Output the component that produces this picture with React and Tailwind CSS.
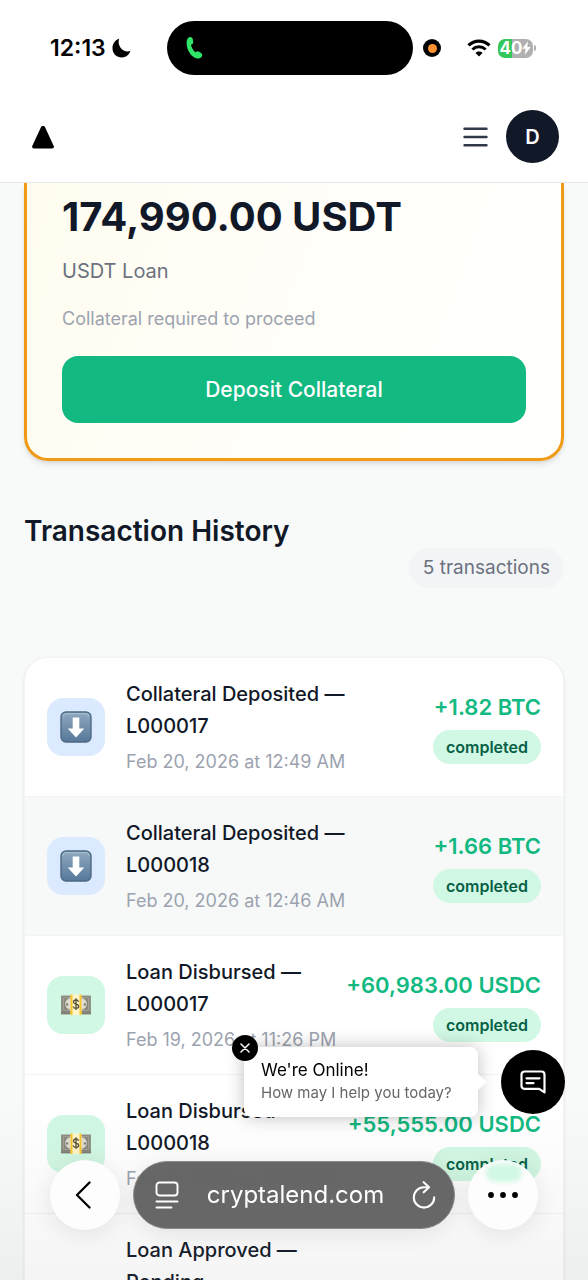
const transactions = [
  { id: 1, type: "deposit", title: "Collateral Deposited —", loan: "L000017", date: "Feb 20, 2026 at 12:49 AM", amount: "+1.82 BTC", status: "completed" },
  { id: 2, type: "deposit", title: "Collateral Deposited —", loan: "L000018", date: "Feb 20, 2026 at 12:46 AM", amount: "+1.66 BTC", status: "completed", active: true },
  { id: 3, type: "loan", title: "Loan Disbursed —", loan: "L000017", date: "Feb 19, 2026 at 11:26 PM", amount: "+60,983.00 USDC", status: "completed" },
  { id: 4, type: "loan", title: "Loan Disbursed —", loan: "L000018", date: "Feb 19, 2026 at 11:20 PM", amount: "+55,555.00 USDC", status: "completed" },
  { id: 5, title: "Loan Approved —", loan: "Pending" },
];

function ArrowIcon() {
  return (
    <svg width="32" height="32" viewBox="0 0 32 32" aria-hidden="true">
      <defs>
        <linearGradient id="tile" x1="0" y1="0" x2="0" y2="1">
          <stop offset="0" stopColor="#8fa9bf" />
          <stop offset="1" stopColor="#56789a" />
        </linearGradient>
      </defs>
      <rect x="1" y="1" width="30" height="30" rx="5" fill="url(#tile)" stroke="#4d6a84" strokeWidth="1.4" />
      <path d="M3 5.500Q3 2.700 6 2.700H26Q29 2.700 29 5.500" fill="none" stroke="#b4c6d5" strokeWidth="0.8" />
      <path d="M12.700 6.500h6.600v11h5L16 26.500 7.700 17.500h5z" fill="#fff" />
    </svg>
  );
}

function MoneyIcon() {
  return (
    <svg width="32" height="22" viewBox="0 0 32 22" aria-hidden="true">
      <rect x="1" y="1.500" width="30" height="19" fill="#96958a" />
      <rect x="3" y="3" width="26" height="14" fill="#bdbbad" stroke="#76756c" strokeWidth="0.7" />
      <path d="M4 4h5l-4 4.500v3L9 16H4zM28 4h-5l4 4.500v3L23 16h5z" fill="#89887d" />
      <ellipse cx="9" cy="10" rx="3.500" ry="5" fill="#dedccf" />
      <ellipse cx="23" cy="10" rx="3.500" ry="5" fill="#dedccf" />
      <circle cx="7" cy="10.500" r="1.300" fill="#85847a" />
      <circle cx="25" cy="10.500" r="1.300" fill="#85847a" />
      <path d="M1 18h30M1 19.500h30" stroke="#6d6c64" strokeWidth="0.6" />
      <rect x="10.500" y="0.500" width="11" height="20.500" fill="#fff5c8" />
      <path d="M11.500 0.500v20.500M20.500 0.500v20.500" stroke="#f6c62f" strokeWidth="2" />
      <path d="M18.600 7.800c-.5-1.300-1.400-1.800-2.600-1.800-1.500 0-2.500.8-2.500 2 0 2.900 5.200 1.500 5.200 4.300 0 1.300-1.100 2.100-2.700 2.100s-2.500-.7-2.800-2M16 4.300v11.800" fill="none" stroke="#57513a" strokeWidth="1.300" />
    </svg>
  );
}

function StatusBar() {
  return (
    <div className="grid h-24 grid-cols-[1fr_auto_1fr] items-center pr-2">
      <div className="flex items-center gap-[6px] pl-[50px]">
        <span className="text-[23px] leading-7 font-semibold text-black">12:13</span>
        <svg width="19" height="20" viewBox="0 0 19 20" aria-hidden="true">
          <path d="M7.200.6C5.600 5 7.600 10.500 11.700 12.500c2.300 1.100 4.700 1.200 6.700.3C17.100 16.900 13.700 19.500 9.700 19.500 4.500 19.500.5 15.500.5 10.200.5 5.800 3.200 2 7.200.6z" fill="#000" />
        </svg>
      </div>
      <div className="flex h-[54px] w-[246px] items-center rounded-full bg-black pl-[19px]">
        <svg width="17" height="24" viewBox="0 0 17 24" aria-hidden="true">
          <path d="M3.300 1.200c1.600-.6 3.100.3 3.400 1.900l.5 2.600c.2 1.300-.4 2.200-1.700 2.700-.5.200-.6.600-.4 1.100.8 2.500 2 4.500 3.800 6.300.4.400.8.500 1.200.1 1-.9 2.100-1 3.100-.2l2.100 1.600c1.200 1 1.300 2.500.2 3.600-2 2-4.700 2.200-7.200.6C3.700 18.500.9 13.400.6 7.200.5 4.200 1.300 2 3.300 1.200z" fill="#30e668" />
        </svg>
      </div>
      <div className="flex items-center pl-[10px]">
        <span className="flex h-[18px] w-[18px] shrink-0 items-center justify-center rounded-full bg-black">
          <span className="h-[9px] w-[9px] rounded-full bg-[#ff9230]" />
        </span>
        <svg className="ml-[26px] shrink-0" width="24" height="18" viewBox="0 0 24 18" fill="none" stroke="#000" aria-hidden="true">
          <path d="M1.500 6.300C7.300.6 16.700.6 22.500 6.300" strokeWidth="3.200" />
          <path d="M5.400 10.500c3.700-3.600 9.500-3.600 13.200 0" strokeWidth="3" />
          <path d="M12 17.600l-3.500-3.700c1.900-1.800 5.100-1.800 7 0z" fill="#000" stroke="none" />
        </svg>
        <div className="ml-[7px] flex items-center gap-px">
          <div className="flex h-[19px] w-[35px] shrink-0 items-center justify-center rounded-[7px] bg-[linear-gradient(90deg,#34c759_41%,#b0b0b0_41%)] text-[17px] leading-5 font-bold text-white">
            40
            <svg width="9" height="14" viewBox="0 0 8 13" aria-hidden="true">
              <path d="M5.500 0L0 7.200h3.200L2.300 13 8 5.500H4.700z" fill="#fff" />
            </svg>
          </div>
          <span className="h-[6px] w-[2px] rounded-r-full bg-[#b0b0b0]" />
        </div>
      </div>
    </div>
  );
}

function Header() {
  return (
    <header className="relative z-10 shrink-0 border-b border-gray-200 bg-white">
      <StatusBar />
      <div className="flex h-[86px] items-start justify-between pt-[14px] pr-[29px] pl-8">
        <a href="#home" aria-label="Home" className="flex h-[53px] items-center">
          <svg width="22" height="24" viewBox="0 0 22 24" aria-hidden="true">
            <path d="M10.600 2.700h.8L20.200 21.800H1.800z" fill="#000" stroke="#000" strokeWidth="3.400" strokeLinejoin="round" />
          </svg>
        </a>
        <div className="flex items-center gap-[18px]">
          <button aria-label="Open menu">
            <svg width="25" height="20" viewBox="0 0 25 20" stroke="#2f3948" strokeWidth="2.400" strokeLinecap="round" aria-hidden="true">
              <path d="M1.500 1.800h22M1.500 10h22M1.500 18.200h22" />
            </svg>
          </button>
          <button className="h-[53px] w-[53px] rounded-full bg-[#111827] text-[20px] font-semibold text-white">D</button>
        </div>
      </div>
    </header>
  );
}

function LoanCard() {
  return (
    <section className="rounded-b-3xl border-[3px] border-t-0 border-[#f09a16] bg-[linear-gradient(110deg,#fffcef,#fffef9_50%,#fffffc)] px-[35px] pt-[10px] pb-[35px] shadow-md">
      <p className="text-[40px] leading-[48px] font-bold text-[#111827]">174,990.00 USDT</p>
      <p className="mt-[14px] text-[20px] leading-8 text-[#6b7280]">USDT Loan</p>
      <p className="mt-[18px] text-[18px] leading-7 text-[#9ca3af]">Collateral required to proceed</p>
      <button className="mt-[23px] h-[67px] w-full rounded-2xl bg-[#12b981] text-[21px] font-medium text-white">
        Deposit Collateral
      </button>
    </section>
  );
}

function TransactionRow({ item }) {
  return (
    <li className={`flex items-center gap-[21px] border-b border-gray-100 px-[22px] py-5 ${item.active ? "bg-[#f7f9f9]" : "bg-white"}`}>
      <div className={`flex h-[58px] w-[58px] shrink-0 items-center justify-center rounded-2xl ${item.type === "deposit" ? "bg-blue-100" : item.type === "loan" ? "bg-[#d1f8e4]" : ""}`}>
        {item.type === "deposit" && <ArrowIcon />}
        {item.type === "loan" && <MoneyIcon />}
      </div>
      <div className="min-w-0 flex-1 whitespace-nowrap">
        <p className="text-[20px] leading-8 font-medium text-[#111827]">
          {item.title}
          <br />
          {item.loan}
        </p>
        <p className="mt-[6px] h-7 text-[18px] leading-7 text-[#9ca3af]">{item.date}</p>
      </div>
      {item.amount && (
        <div className="flex flex-col items-end gap-[7px]">
          <span className="text-[22px] leading-8 font-semibold whitespace-nowrap text-[#12b981]">{item.amount}</span>
          <span className="flex h-[34px] items-center rounded-full bg-[#d1f8e4] px-[13px] text-base font-semibold text-[#065f46]">{item.status}</span>
        </div>
      )}
    </li>
  );
}

function ChatWidget() {
  return (
    <div className="fixed right-[23px] bottom-[163px] left-[244px] flex items-center justify-end gap-[23px]">
      <div className="relative h-[70px] min-w-0 flex-1 rounded-lg bg-white px-[17px] pt-[11px] whitespace-nowrap shadow-[0_0_18px_rgba(0,0,0,0.25)]">
        <p className="text-[17px] leading-6 text-black">We're Online!</p>
        <p className="text-[15px] leading-[22px] text-[#666]">How may I help you today?</p>
        <svg className="absolute top-[27px] left-full" width="9" height="16" viewBox="0 0 9 16" aria-hidden="true">
          <path d="M0 0l9 8-9 8z" fill="#fff" />
        </svg>
        <button aria-label="Close message" className="absolute -top-3 -left-3 flex h-[26px] w-[26px] items-center justify-center rounded-full bg-black">
          <svg width="10" height="10" viewBox="0 0 10 10" stroke="#fff" strokeWidth="1.500" strokeLinecap="round" aria-hidden="true">
            <path d="M1 1l8 8M9 1L1 9" />
          </svg>
        </button>
      </div>
      <button aria-label="Open chat" className="flex h-16 w-16 shrink-0 items-center justify-center rounded-full bg-black">
        <svg width="26" height="24" viewBox="0 0 26 24" fill="none" stroke="#fff" strokeWidth="2.200" strokeLinecap="round" strokeLinejoin="round" aria-hidden="true">
          <path d="M24.500 22.300V4.500a3 3 0 0 0-3-3h-17a3 3 0 0 0-3 3v11.300a3 3 0 0 0 3 3h14.700z" />
          <path d="M6.500 8.300h13M6.500 13.100h7" />
        </svg>
      </button>
    </div>
  );
}

function BrowserBar() {
  return (
    <nav className="fixed right-[50px] bottom-[50px] left-[50px] flex items-center gap-[13px]">
      <button aria-label="Back" className="flex h-[70px] w-[70px] shrink-0 items-center justify-center rounded-full bg-[#fdfdfd] pr-1 shadow-[0_4px_24px_rgba(0,0,0,0.09)]">
        <svg width="16" height="28" viewBox="0 0 16 28" fill="none" stroke="#000" strokeWidth="2.300" strokeLinecap="round" strokeLinejoin="round" aria-hidden="true">
          <path d="M14.500 1.500L2 14l12.500 12.500" />
        </svg>
      </button>
      <div className="flex h-[68px] min-w-0 flex-1 items-center justify-between rounded-full border border-[#8a8a8a] bg-[#5f5f5f]/95 pr-[18px] pl-[21px] text-white shadow-[0_4px_24px_rgba(0,0,0,0.09)] backdrop-blur-xs">
        <button aria-label="Page menu">
          <svg width="24" height="28" viewBox="0 0 24 28" fill="none" stroke="#fff" strokeWidth="1.900" strokeLinecap="round" aria-hidden="true">
            <rect x="1.500" y="1.500" width="21" height="13" rx="3" />
            <path d="M1.500 20.500h21M1.500 26.500h15" />
          </svg>
        </button>
        <a href="#address" className="text-[24px] leading-8">cryptalend.com</a>
        <button aria-label="Reload">
          <svg width="24" height="28" viewBox="0 0 24 28" fill="none" stroke="#fff" strokeWidth="2.100" strokeLinecap="round" strokeLinejoin="round" aria-hidden="true">
            <path d="M16.500 6.200H12A10.200 10.200 0 1 0 22.200 16.400" />
            <path d="M11.700 1.200l5.300 5-5.300 5.100" />
          </svg>
        </button>
      </div>
      <button aria-label="More" className="relative flex h-[70px] w-[70px] shrink-0 items-center justify-center overflow-hidden rounded-full bg-[#fdfdfd] shadow-[0_4px_24px_rgba(0,0,0,0.09)]">
        <span className="absolute top-1 left-[18px] h-[18px] w-9 rounded-full bg-[#d1f8e4] blur-[2px]" />
        <svg width="30" height="6" viewBox="0 0 30 6" fill="#000" aria-hidden="true">
          <circle cx="3" cy="3" r="2.900" />
          <circle cx="15" cy="3" r="2.900" />
          <circle cx="27" cy="3" r="2.900" />
        </svg>
      </button>
    </nav>
  );
}

function App() {
  return (
    <div className="flex h-screen flex-col overflow-hidden bg-[#f8faf9] font-[Inter,sans-serif]">
      <Header />
      <main className="min-h-0 flex-1 px-6">
        <LoanCard />
        <div className="mt-[53px] flex flex-col">
          <h2 className="text-[28px] leading-[34px] font-semibold text-[#111827]">Transaction History</h2>
          <span className="flex h-10 items-center self-end rounded-full bg-gray-100 px-[14px] text-[19px] text-[#6b7280]">5 transactions</span>
        </div>
        <ul className="mt-[69px] overflow-hidden rounded-3xl border border-gray-100 bg-white shadow-sm">
          {transactions.map((item) => (
            <TransactionRow key={item.id} item={item} />
          ))}
        </ul>
      </main>
      <div className="pointer-events-none fixed inset-x-0 bottom-0 h-44 bg-linear-to-b from-transparent to-[#808080]/8" />
      <ChatWidget />
      <BrowserBar />
    </div>
  );
}

export default App;
